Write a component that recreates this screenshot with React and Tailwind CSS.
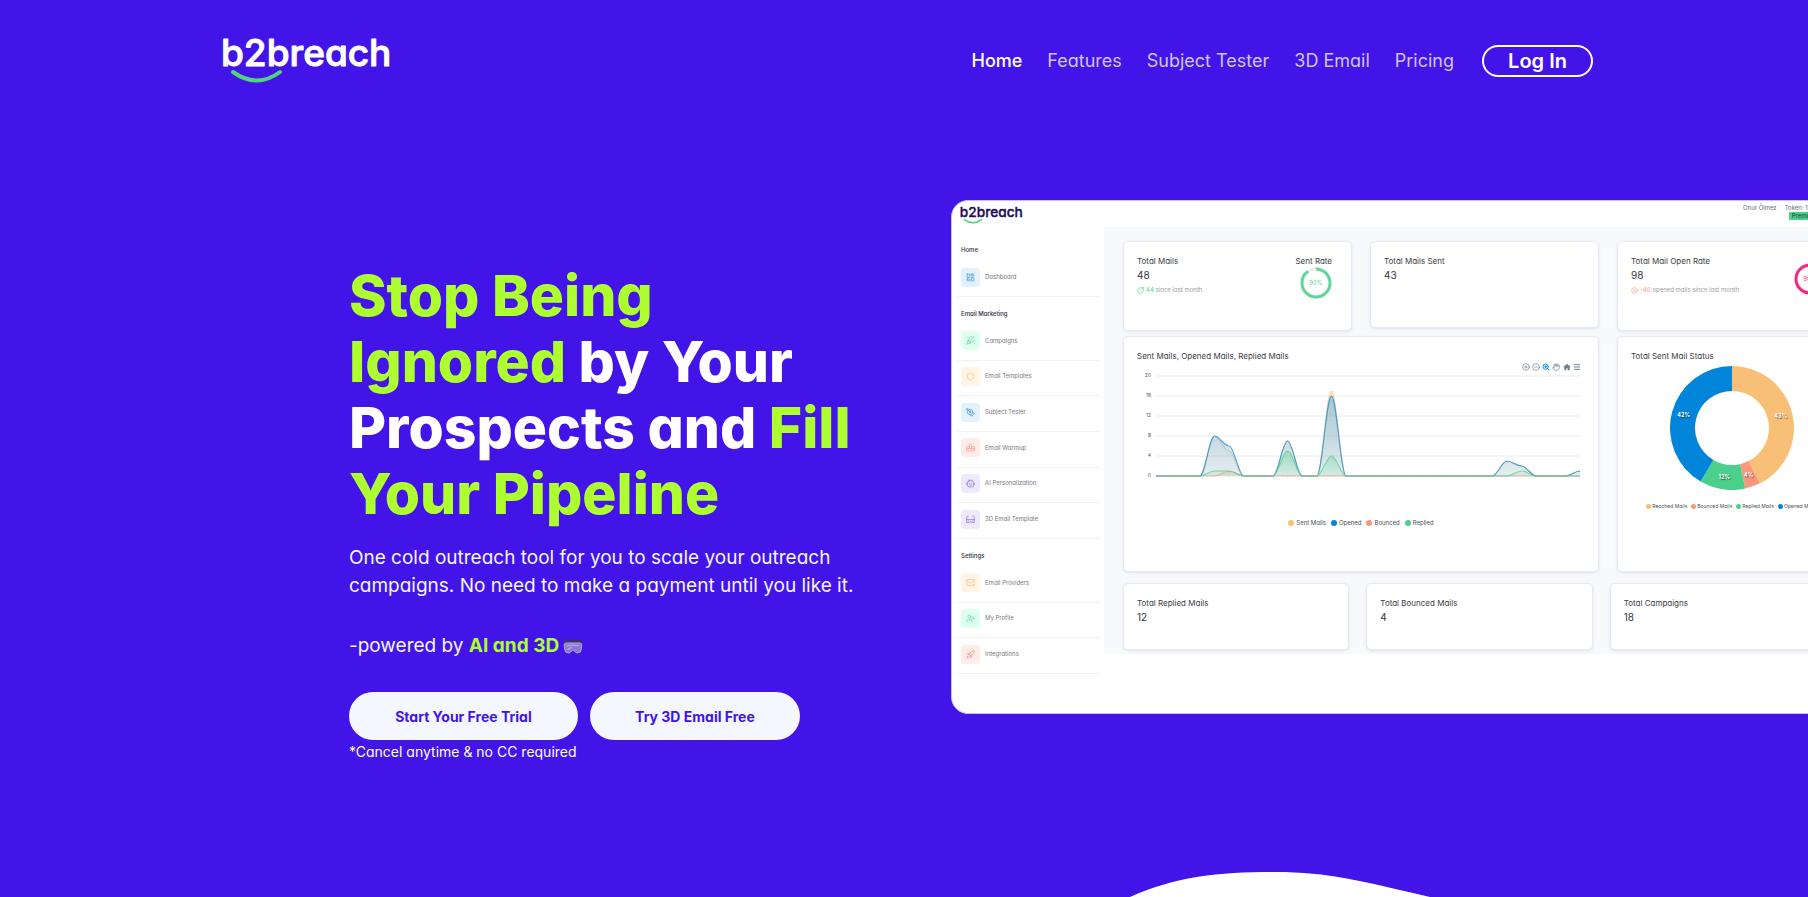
import {
  LayoutDashboard,
  PartyPopper,
  Shield,
  PenTool,
  MailPlus,
  UserPlus,
  Rocket,
  CirclePlus,
  CircleMinus,
  ZoomIn,
  Hand,
  Menu,
  CircleArrowOutUpRight,
  CircleX,
} from "lucide-react";

function Logo({ className, color }) {
  return (
    <svg viewBox="0 0 170 46" className={`overflow-visible ${className}`} role="img" aria-label="b2breach">
      <text
        x="-2"
        y="28"
        fontSize="37"
        fontWeight="500"
        fill={color}
        stroke={color}
        strokeWidth="1"
        strokeLinejoin="round"
      >
        b2breach
      </text>
      <path d="M10 34 Q34 51 57 34" fill="none" stroke="#52d37c" strokeWidth="4" strokeLinecap="round" />
    </svg>
  );
}

const links = ["Features", "Subject Tester", "3D Email", "Pricing"];

function Header() {
  return (
    <header className="mx-auto flex h-[122px] w-full max-w-[1378px] items-center justify-between pl-2">
      <a href="#home" className="block">
        <Logo className="h-[46px] w-[170px]" color="#ffffff" />
      </a>
      <nav className="flex items-center gap-[25px] text-[18px] leading-6 text-[#d0c4f9]">
        <a href="#home" className="font-medium text-white">Home</a>
        {links.map((l) => (
          <a key={l} href="#" className="whitespace-nowrap">{l}</a>
        ))}
        <button type="button" className="ml-[3px] h-8 w-[111px] rounded-full border-2 border-white text-[20px] leading-7 font-semibold text-white">
          Log In
        </button>
      </nav>
    </header>
  );
}

function Goggles() {
  return (
    <svg viewBox="0 0 20 15" className="ml-1 inline-block h-[15px] w-5 align-[-2px]" aria-hidden="true">
      <path d="M0.800 3.500 Q1 1 3.500 0.800 H16.500 Q19 1 19.200 3.500 L18.500 6 H1.500 Z" fill="#3b2f74" />
      <path d="M1.200 5.500 Q1.200 4 3.500 4 H16.500 Q18.800 4 18.800 5.500 L18.300 10.500 Q17.800 14 14.500 14 Q12.500 14 11.500 12 Q10 9.800 8.500 12 Q7.500 14 5.500 14 Q2.200 14 1.700 10.500 Z" fill="#8a78d6" stroke="#b5abdf" strokeWidth="1" />
      <path d="M4 7 Q9 5.500 15.500 7 M5 10.500 L8 8.500" fill="none" stroke="#b9aef0" strokeWidth="1.200" strokeLinecap="round" />
    </svg>
  );
}

function Pitch() {
  return (
    <section className="flex-1 pt-[63px] pl-[19.3%] whitespace-nowrap text-white">
      <h1 className="text-[57px] leading-[66px] font-extrabold">
        <span className="text-[#adff2f]">Stop Being</span>
        <br />
        <span className="text-[#adff2f]">Ignored</span> by Your
        <br />
        Prospects and <span className="text-[#adff2f]">Fill</span>
        <br />
        <span className="text-[#adff2f]">Your Pipeline</span>
      </h1>
      <p className="mt-[17px] text-[19px] leading-7 text-[#f4f6ff]">
        One cold outreach tool for you to scale your outreach
        <br />
        campaigns. No need to make a payment until you like it.
      </p>
      <p className="mt-8 text-[19px] leading-7 text-[#f4f6ff]">
        -powered by <span className="font-bold text-[#adff2f]">AI and 3D</span>
        <Goggles />
      </p>
      <div className="mt-8 flex gap-3 text-[14px] font-bold text-[#4214e8]">
        <button type="button" className="h-12 w-[229px] rounded-full bg-[#f4f7ff]">Start Your Free Trial</button>
        <button type="button" className="h-12 w-[210px] rounded-full bg-[#f4f7ff]">Try 3D Email Free</button>
      </div>
      <p className="mt-0.5 text-[14px] leading-5">*Cancel anytime &amp; no CC required</p>
    </section>
  );
}

function SmallIcon({ size, children }) {
  return (
    <svg viewBox="0 0 24 24" width={size} height={size} fill="none" stroke="currentColor" strokeWidth="2" strokeLinecap="round" strokeLinejoin="round" aria-hidden="true">
      {children}
    </svg>
  );
}

function RobotIcon({ size }) {
  return (
    <SmallIcon size={size}>
      <rect x="4" y="5" width="16" height="16" rx="4" />
      <path d="M8 5V2M16 5V2M1.500 11v4M22.500 11v4M9 11v1M15 11v1M9 16h6" />
    </SmallIcon>
  );
}

function GlassesIcon({ size }) {
  return (
    <SmallIcon size={size}>
      <path d="M2 13V6q0-3 3-3h1M22 13V6q0-3-3-3h-1M2 12h20v8h-8l-2-3-2 3H2z" />
      <path d="M5 16h3M16 16h3" />
    </SmallIcon>
  );
}

function WarmupIcon({ size }) {
  return (
    <SmallIcon size={size}>
      <path d="M8 10H2v11h20V10h-6M2 15h20" />
      <path d="M9 15V9q-2-4 3-7 0 3 2 4t1 4v5" />
    </SmallIcon>
  );
}

const blue = "bg-[#e3f1fc] text-[#3f9be6]";
const green = "bg-[#defff0] text-[#63d79b]";
const orange = "bg-[#fff4e6] text-[#f9c07a]";
const red = "bg-[#ffebe8] text-[#fb9a88]";
const purple = "bg-[#efe9ff] text-[#9a7be0]";

const mainItems = [
  ["Campaigns", PartyPopper, green],
  ["Email Templates", Shield, orange],
  ["Subject Tester", PenTool, blue],
  ["Email Warmup", WarmupIcon, red],
  ["AI Personalization", RobotIcon, purple],
  ["3D Email Template", GlassesIcon, purple],
];
const settingItems = [
  ["Email Providers", MailPlus, orange],
  ["My Profile", UserPlus, green],
  ["Integrations", Rocket, red],
];

function SideItem({ item }) {
  const [label, Icon, tone] = item;
  return (
    <li className="flex border-b border-[#f1f2f4] pb-[3px]">
      <a href="#" className="flex items-center gap-[5px] pl-1 text-[6px] leading-[10px] text-[#77797f]">
        <span className={`flex h-[19px] w-[19px] items-center justify-center rounded-[4px] ${tone}`}>
          <Icon size={9} />
        </span>
        {label}
      </a>
    </li>
  );
}

function SideLabel({ children }) {
  return <h2 className="flex h-7 items-center pt-1 pl-1 text-[6px] font-medium text-[#2a2d36]">{children}</h2>;
}

function Sidebar() {
  return (
    <aside className="w-[152px] shrink-0 pt-[6px] pr-1 pl-[5px]">
      <SideLabel>Home</SideLabel>
      <ul className="grid h-9">
        <SideItem item={["Dashboard", LayoutDashboard, blue]} />
      </ul>
      <SideLabel>Email Marketing</SideLabel>
      <ul className="grid h-[214px] auto-rows-fr">
        {mainItems.map((i) => <SideItem key={i[0]} item={i} />)}
      </ul>
      <SideLabel>Settings</SideLabel>
      <ul className="grid h-[107px] auto-rows-fr">
        {settingItems.map((i) => <SideItem key={i[0]} item={i} />)}
      </ul>
    </aside>
  );
}

function Card({ title, value, className = "", children }) {
  return (
    <div className={`rounded-[5px] border border-[#e6e9f3] bg-white px-[13px] pt-[13px] shadow-[0_1px_3px_#dfe3f2] ${className}`}>
      <h3 className="text-[8px] leading-3 text-[#3a3d45]">{title}</h3>
      {value && <p className="mt-0.5 text-[10px] leading-3 text-[#33363f]">{value}</p>}
      {children}
    </div>
  );
}

function Ring({ value, color }) {
  const c = 2 * Math.PI * 14;
  return (
    <div className="grid h-8 w-8 place-items-center">
      <svg viewBox="0 0 32 32" className="col-start-1 row-start-1 h-8 w-8" aria-hidden="true">
        <circle cx="16" cy="16" r="14" fill="none" stroke="#f0f1f3" strokeWidth="2.600" />
        <circle cx="16" cy="16" r="14" fill="none" stroke={color} strokeWidth="3" strokeDasharray={`${(c * value) / 100} ${c}`} transform="rotate(-90 16 16)" />
      </svg>
      <span className="col-start-1 row-start-1 text-[6px] leading-none" style={{ color }}>{value}%</span>
    </div>
  );
}

const STEP = 424 / 29;
function series(points) {
  const v = Array.from({ length: 30 }, (_, i) => points[i] || 0);
  let d = `M0 ${101 - v[0] * 5}`;
  for (let i = 1; i < 30; i++) {
    const x0 = (i - 1) * STEP;
    const x1 = i * STEP;
    const k = STEP * 0.35;
    const y0 = 101 - v[i - 1] * 5;
    const y1 = 101 - v[i] * 5;
    d += ` C${x0 + k} ${y0} ${x1 - k} ${y1} ${x1} ${y1}`;
  }
  return d;
}
const lines = [
  ["Sent Mails", "#f8bf76", { 4: 8, 5: 5, 9: 7, 12: 17, 24: 3, 25: 2, 29: 1 }, "bg-[#f8bf76]"],
  ["Opened", "#0085db", { 4: 8, 5: 6, 9: 7, 12: 16, 24: 3, 25: 2, 29: 1 }, "bg-[#0085db]"],
  ["Bounced", "#fb977d", { 5: 1 }, "bg-[#fb977d]"],
  ["Replied", "#4bd08b", { 4: 1, 5: 1, 9: 5, 12: 4, 25: 1 }, "bg-[#4bd08b]"],
];

function LineChart() {
  return (
    <>
      <div className="mt-px mr-1 flex justify-end gap-[2px] text-[#6e8192]">
        <CirclePlus size={8} />
        <CircleMinus size={8} />
        <ZoomIn size={8} strokeWidth={3} className="text-[#008ffb]" />
        <Hand size={8} />
        <svg viewBox="0 0 24 24" className="ml-px h-2 w-2" fill="currentColor" aria-hidden="true">
          <path d="M12 2 0 13h4v9h6v-6h4v6h6v-9h4z" />
        </svg>
        <Menu size={8} strokeWidth={3} />
      </div>
      <div className="flex">
        <div className="flex h-[108px] w-[14px] flex-col justify-between text-right text-[5px] leading-[8px] text-[#52565f]">
          {[20, 16, 12, 8, 4, 0].map((n) => <span key={n}>{n}</span>)}
        </div>
        <svg viewBox="0 0 424 106" className="mt-1 ml-[5px] h-[106px] w-[424px]" role="img" aria-label="Mails per day">
          {lines.map(([name, c]) => (
            <linearGradient key={name} id={name.replace(" ", "")} x1="0" y1="0" x2="0" y2="1">
              <stop offset="0" stopColor={c} stopOpacity="0.350" />
              <stop offset="1" stopColor={c} stopOpacity="0.100" />
            </linearGradient>
          ))}
          {[0, 1, 2, 3, 4, 5].map((i) => (
            <path key={i} d={`M0 ${i * 20 + 1}H424`} stroke="#ebecee" strokeWidth="1" />
          ))}
          {Array.from({ length: 30 }, (_, i) => (
            <path key={i} d={`M${i * STEP} 101v3`} stroke="#e3e5e8" strokeWidth="0.600" />
          ))}
          {lines.map(([name, c, pts]) => (
            <g key={name}>
              <path d={`${series(pts)} V101 H0 Z`} fill={`url(#${name.replace(" ", "")})`} />
              <path d={series(pts)} fill="none" stroke={c} strokeWidth="1.100" strokeOpacity="0.700" />
            </g>
          ))}
        </svg>
      </div>
      <ul className="mt-[37px] flex justify-center gap-[5px] text-[6px] leading-[10px] text-[#4b4f58]">
        {lines.map(([name, , , bg]) => (
          <li key={name} className="flex items-center gap-[2px]">
            <span className={`h-[6px] w-[6px] rounded-full ${bg}`} />
            {name}
          </li>
        ))}
      </ul>
    </>
  );
}

const slices = [
  ["Reached Mails", 43, "#f8bf76", "bg-[#f8bf76]"],
  ["Bounced Mails", 4, "#fb977d", "bg-[#fb977d]"],
  ["Replied Mails", 12, "#4bd08b", "bg-[#4bd08b]"],
  ["Opened Mails", 42, "#0085db", "bg-[#0085db]"],
];

function Donut() {
  let acc = 0;
  const at = (t, r) => {
    const a = (t / 101) * 2 * Math.PI;
    return [62 + r * Math.sin(a), 62 - r * Math.cos(a)];
  };
  return (
    <>
      <svg viewBox="0 0 124 124" className="mx-auto mt-1 h-[124px] w-[124px]" role="img" aria-label="Total Sent Mail Status">
        {slices.map(([name, v, c]) => {
          const [x0, y0] = at(acc, 62);
          const [x1, y1] = at(acc + v, 62);
          const [x2, y2] = at(acc + v, 37);
          const [x3, y3] = at(acc, 37);
          const [tx, ty] = at(acc + v / 2, 50);
          acc += v;
          return (
            <g key={name}>
              <path d={`M${x0} ${y0}A62 62 0 0 1 ${x1} ${y1}L${x2} ${y2}A37 37 0 0 0 ${x3} ${y3}Z`} fill={c} />
              <text x={tx} y={ty + 2} fontSize="5.500" fontWeight="700" fill="#fff" textAnchor="middle" className="[text-shadow:1px_1px_1px_#00000088]">{v}%</text>
            </g>
          );
        })}
      </svg>
      <ul className="mt-3 flex justify-center gap-1 text-[5px] leading-[8px] whitespace-nowrap text-[#4b4f58]">
        {slices.map(([name, , , bg]) => (
          <li key={name} className="flex items-center gap-px">
            <span className={`h-[5px] w-[5px] rounded-full ${bg}`} />
            {name}
          </li>
        ))}
      </ul>
    </>
  );
}

function Dashboard() {
  return (
    <div className="w-[914px] overflow-hidden rounded-[17px] border border-[#c9bdf8] bg-white pb-[39px]">
      <div className="flex h-[26px] items-start justify-between pr-[21px] pl-2">
        <Logo className="mt-[6px] h-[17px] w-[64px]" color="#1c0d5a" />
        <div className="flex w-[100px] gap-2 pt-[3px] text-[6px] leading-2 whitespace-nowrap text-[#696c74]">
          <span>Onur Ölmez</span>
          <div>
            <p>Token: 19820</p>
            <p className="ml-1 rounded-[1px] bg-[#4bd08b] px-[3px] font-medium text-[#24503c]">Premium</p>
          </div>
        </div>
      </div>
      <div className="flex items-start">
        <Sidebar />
        <div className="min-w-0 flex-1 bg-[#f8f9fb] pt-[14px] pb-1 pl-[19px]">
          <div className="mr-[18px] grid grid-cols-3 items-start gap-x-[18px] gap-y-[5px]">
            <div className="grid">
              <Card title="Total Mails" value="48" className="col-start-1 row-start-1 h-[90px]">
                <p className="mt-[5px] flex items-center gap-[2px] text-[6px] leading-2 text-[#9a9da4]">
                  <CircleArrowOutUpRight size={7} className="text-[#4bd08b]" />
                  <span className="text-[#4bd08b]">44</span> since last month
                </p>
              </Card>
              <div className="col-start-1 row-start-1 mt-[14px] mr-5 flex flex-col items-end justify-self-end">
                <h3 className="text-[8px] leading-3 text-[#3a3d45]">Sent Rate</h3>
                <Ring value={90} color="#62d698" />
              </div>
            </div>
            <Card title="Total Mails Sent" value="43" className="h-[87px]" />
            <div className="grid">
              <Card title="Total Mail Open Rate" value="98" className="col-start-1 row-start-1 h-[90px]">
                <p className="mt-[5px] flex items-center gap-[2px] text-[6px] leading-2 text-[#9a9da4]">
                  <CircleX size={7} className="text-[#fb977d]" />
                  <span className="text-[#fb977d]">-40</span> opened mails since last month
                </p>
              </Card>
              <div className="col-start-1 row-start-1 mt-[22px] mr-5 justify-self-end">
                <Ring value={98} color="#f72585" />
              </div>
            </div>
            <Card title="Sent Mails, Opened Mails, Replied Mails" className="col-span-2 h-[236px]">
              <LineChart />
            </Card>
            <Card title="Total Sent Mail Status" className="h-[236px]">
              <Donut />
            </Card>
          </div>
          <div className="mt-[11px] mr-[28px] grid grid-cols-3 gap-x-[17px]">
            <Card title="Total Replied Mails" value="12" className="h-[67px]" />
            <Card title="Total Bounced Mails" value="4" className="h-[67px]" />
            <Card title="Total Campaigns" value="18" className="h-[67px]" />
          </div>
        </div>
      </div>
    </div>
  );
}

export default function App() {
  return (
    <div className="flex min-h-screen flex-col overflow-hidden bg-[#4214e8] font-[Inter,sans-serif] [font-feature-settings:'cv11']">
      <Header />
      <main className="flex items-start pt-[78px]">
        <Pitch />
        <div className="w-[47.4%] min-w-0">
          <Dashboard />
        </div>
      </main>
      <svg viewBox="0 0 1808 25" preserveAspectRatio="none" className="mt-auto block h-[25px] w-full" aria-hidden="true">
        <path d="M1130 25 C1177 4 1220 0 1275 0 C1330 0 1360 9 1430 25 Z" fill="#ffffff" />
      </svg>
    </div>
  );
}
